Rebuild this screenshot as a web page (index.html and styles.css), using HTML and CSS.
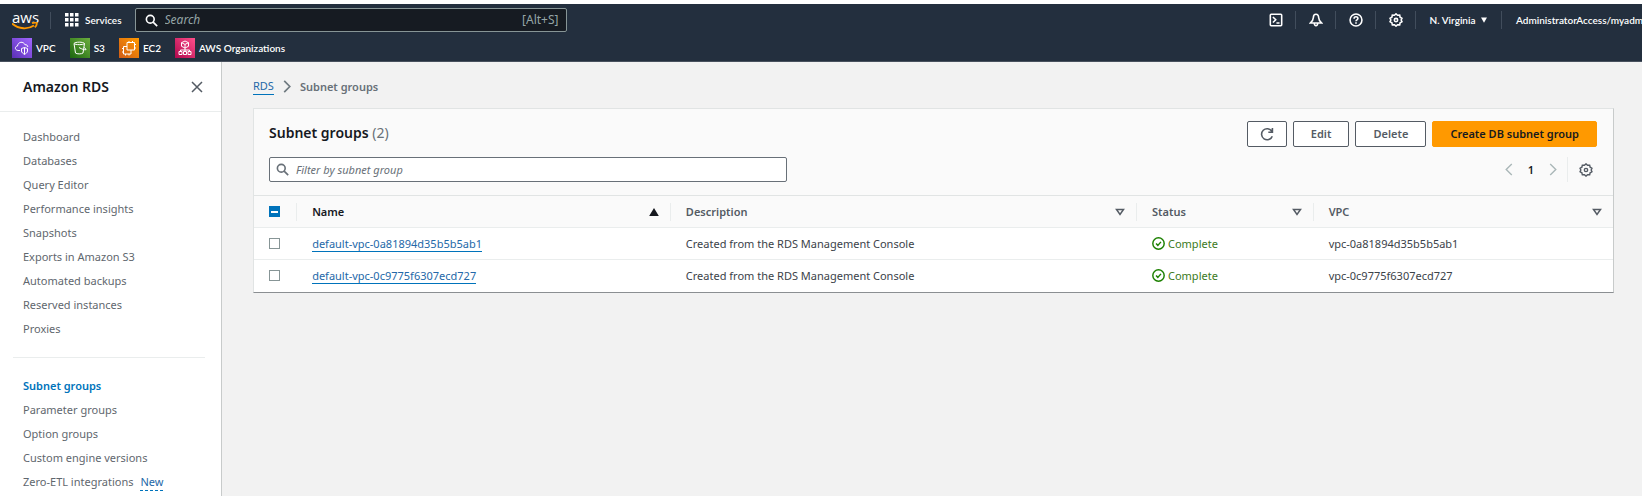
FILE: index.html
```html
<!DOCTYPE html>
<html lang="en">
<head>
<meta charset="utf-8">
<title>RDS - Subnet groups</title>
<link rel="stylesheet" href="styles.css">
</head>
<body>
<svg class="defs" aria-hidden="true">
  <symbol id="gear" viewBox="0 0 16 16"><path d="M6.200 2.600 8 1l1.800 1.600 2.400-.1.500 2.300L14.800 6l-.9 2 .9 2-2.100 1.200-.5 2.300-2.400-.1L8 15l-1.800-1.600-2.400.1-.5-2.300L1.200 10l.9-2-.9-2 2.100-1.200.5-2.300z"/><circle cx="8" cy="8" r="1.900"/></symbol>
  <symbol id="lens" viewBox="0 0 16 16"><circle cx="6.500" cy="6.500" r="4.800"/><path d="m10 10 5 5"/></symbol>
  <symbol id="sort" viewBox="0 0 10 8"><path d="M1.500 1.500h7L5 6.500z"/></symbol>
  <symbol id="ok" viewBox="0 0 16 16"><circle cx="8" cy="8" r="7"/><path d="m5 8 2.200 2.300L11 6"/></symbol>
  <linearGradient id="purple" x1="0" y1="1" x2="1" y2="0"><stop stop-color="#5a30b5"/><stop offset="1" stop-color="#a166ff"/></linearGradient>
  <linearGradient id="green" x1="0" y1="1" x2="1" y2="0"><stop stop-color="#1b660f"/><stop offset="1" stop-color="#6cae3e"/></linearGradient>
  <linearGradient id="orange" x1="0" y1="1" x2="1" y2="0"><stop stop-color="#d05c17"/><stop offset="1" stop-color="#f90"/></linearGradient>
  <linearGradient id="pink" x1="0" y1="1" x2="1" y2="0"><stop stop-color="#b0084d"/><stop offset="1" stop-color="#ff4f8b"/></linearGradient>
</svg>
<header class="top">
  <div class="top-row">
    <a class="logo" href="#" aria-label="aws"><span class="logo-word">aws</span>
      <svg class="smile" viewBox="0 0 26 8"><path d="M0 1.500c7 6 16 6 22 2" /><path d="M20 1.200c2-.9 4.500-.9 4.700-.2.300 1-.7 3.200-1.900 4.400"/></svg></a>
    <button class="services"><svg class="grid-icon" viewBox="0 0 14 14"><path d="M0 0h3.500v3.500H0zM5 0h3.500v3.500H5zM10 0h3.500v3.500H10zM0 5h3.500v3.500H0zM5 5h3.500v3.500H5zM10 5h3.500v3.500H10zM0 10h3.500v3.500H0zM5 10h3.500v3.500H5zM10 10h3.500v3.500H10z"/></svg>Services</button>
    <label class="search"><svg class="lens"><use href="#lens"/></svg><input type="search" placeholder="Search" aria-label="Search"><span class="key">[Alt+S]</span></label>
    <nav class="tools" aria-label="Account tools">
      <button class="tool" aria-label="CloudShell"><svg class="tool-icon" viewBox="0 0 16 16"><rect x="1.500" y="1.500" width="13" height="13" rx="1"/><path d="m4.500 4.500 3.200 3.200-3.200 3.200M8.500 11.500H12"/></svg></button>
      <button class="tool" aria-label="Notifications"><svg class="tool-icon" viewBox="0 0 16 16"><path d="M8 1.500c-2 0-3 1.500-3 3.500 0 2.500-1 4-3.500 6.500h13C12 9 11 7.500 11 5c0-2-1-3.500-3-3.500zM6 11.500c.2 4 3.800 4 4 0"/></svg></button>
      <button class="tool" aria-label="Help"><svg class="tool-icon" viewBox="0 0 16 16"><circle cx="8" cy="8" r="6.800"/><path d="M5.800 6.500c0-3 4.400-2.800 4.400-.2C10.200 8 8 7.800 8 9.500M8 10.700v1.600"/></svg></button>
      <button class="tool" aria-label="Settings"><svg class="tool-icon"><use href="#gear"/></svg></button>
      <button class="region">N. Virginia <svg class="caret" viewBox="0 0 8 7"><path d="M0 0h8L4 7z"/></svg></button>
      <button class="account">AdministratorAccess/myadm</button>
    </nav>
  </div>
  <nav class="favorites" aria-label="Favorites">
    <a href="#"><svg class="fav" viewBox="0 0 20 20"><path fill="url(#purple)" d="M0 0h20v20H0z"/><path class="ln" d="M8 12.500H6c-3.500-.5-3.300-4.200-.5-4.500.5-4.500 6-5 7.500-1.200 1.500-.4 2.800.5 2.800 2.200M12.500 9.500l3 1v2.500c0 1.500-1.500 2.600-3 3.300-1.500-.7-3-1.800-3-3.300v-2.500zM12.500 9.500v7"/></svg>VPC</a>
    <a href="#"><svg class="fav" viewBox="0 0 20 20"><path fill="url(#green)" d="M0 0h20v20H0z"/><path class="ln" d="m4 5.500 1.500 9.500c1.500 1.200 6 1.200 7.500 0l1.500-9.500M4 5.500c1-1.800 9.500-1.800 10.500 0-1 1.500-9.500 1.500-10.500 0M9 9.500c3 1.800 5.500 2.500 7 2.200.3-.7-1-1.700-2-2.200"/></svg>S3</a>
    <a href="#"><svg class="fav" viewBox="0 0 20 20"><path fill="url(#orange)" d="M0 0h20v20H0z"/><path class="ln" d="M8 4.500h7.500V12H8zM8 8.500H4.500V16H12v-4M10 3v1.500M13.500 3v1.500M15.500 6.500H17M15.500 10H17M3 10.500h1.500M3 14h1.500M6.500 16v1.500M10 16v1.500"/></svg>EC2</a>
    <a href="#"><svg class="fav" viewBox="0 0 20 20"><path fill="url(#pink)" d="M0 0h20v20H0z"/><path class="ln" d="m10 3 3.500 1.700v3.600L10 10 6.500 8.300V4.700zM6.500 4.700 10 6.400l3.500-1.700M10 6.400V14M5.500 13.500V12h9v1.500M4 13.500h3v3H4zM8.500 13.500h3v3h-3zM13 13.500h3v3h-3z"/></svg>AWS Organizations</a>
  </nav>
</header>
<div class="layout">
  <aside class="sidebar">
    <div class="side-head"><h2>Amazon RDS</h2><button aria-label="Close navigation"><svg class="close" viewBox="0 0 12 12"><path d="m1 1 10 10M11 1 1 11"/></svg></button></div>
    <nav class="side-nav" aria-label="Amazon RDS">
      <ul><li><a href="#">Dashboard</a></li><li><a href="#">Databases</a></li><li><a href="#">Query Editor</a></li><li><a href="#">Performance insights</a></li><li><a href="#">Snapshots</a></li><li><a href="#">Exports in Amazon S3</a></li><li><a href="#">Automated backups</a></li><li><a href="#">Reserved instances</a></li><li><a href="#">Proxies</a></li></ul>
      <hr>
      <ul><li><a class="current" href="#" aria-current="page">Subnet groups</a></li><li><a href="#">Parameter groups</a></li><li><a href="#">Option groups</a></li><li><a href="#">Custom engine versions</a></li><li><a href="#">Zero-ETL integrations</a><button class="new">New</button></li></ul>
    </nav>
  </aside>
  <main class="main">
    <nav class="crumbs" aria-label="Breadcrumb"><a href="#">RDS</a><svg class="crumb-arrow" viewBox="0 0 8 14"><path d="m1 1 6 6-6 6"/></svg><span>Subnet groups</span></nav>
    <section class="card">
      <div class="card-head">
        <h1>Subnet groups <span>(2)</span></h1>
        <div class="actions">
          <button class="btn refresh" aria-label="Refresh"><svg class="refresh-icon" viewBox="0 0 16 16"><path d="M14 10.500A6.300 6.300 0 1 1 13.500 5M14.200 1v5H9.500"/></svg></button>
          <button class="btn">Edit</button><button class="btn">Delete</button><button class="btn primary">Create DB subnet group</button>
        </div>
      </div>
      <div class="filter-row">
        <label class="filter"><svg class="lens"><use href="#lens"/></svg><input type="search" placeholder="Filter by subnet group" aria-label="Filter by subnet group"></label>
        <div class="pager">
          <button aria-label="Previous page"><svg class="page-arrow" viewBox="0 0 8 14"><path d="M7 1 1 7l6 6"/></svg></button>
          <button class="page">1</button>
          <button aria-label="Next page"><svg class="page-arrow" viewBox="0 0 8 14"><path d="m1 1 6 6-6 6"/></svg></button>
          <button class="prefs" aria-label="Preferences"><svg class="prefs-icon"><use href="#gear"/></svg></button>
        </div>
      </div>
      <table>
        <colgroup><col class="c-check"><col class="c-name"><col class="c-desc"><col class="c-status"><col class="c-vpc"></colgroup>
        <thead><tr>
          <th><input type="checkbox" class="some" aria-label="Select all"></th>
          <th class="sorted"><div>Name<svg class="sort" viewBox="0 0 10 8"><path d="M1.500 7.200h7L5 1.500z"/></svg></div></th>
          <th><div>Description<svg class="sort"><use href="#sort"/></svg></div></th>
          <th><div>Status<svg class="sort"><use href="#sort"/></svg></div></th>
          <th><div>VPC<svg class="sort"><use href="#sort"/></svg></div></th>
        </tr></thead>
        <tbody>
          <tr><td><input type="checkbox" aria-label="Select default-vpc-0a81894d35b5b5ab1"></td><td><a href="#">default-vpc-0a81894d35b5b5ab1</a></td><td>Created from the RDS Management Console</td><td><span class="status"><svg class="ok"><use href="#ok"/></svg>Complete</span></td><td>vpc-0a81894d35b5b5ab1</td></tr>
          <tr><td><input type="checkbox" aria-label="Select default-vpc-0c9775f6307ecd727"></td><td><a href="#">default-vpc-0c9775f6307ecd727</a></td><td>Created from the RDS Management Console</td><td><span class="status"><svg class="ok"><use href="#ok"/></svg>Complete</span></td><td>vpc-0c9775f6307ecd727</td></tr>
        </tbody>
      </table>
    </section>
  </main>
</div>
</body>
</html>
```
FILE: styles.css
```css
* { box-sizing: border-box; }
html, body { height: 100%; }
body { margin: 0; padding-top: 4px; display: flex; flex-direction: column; overflow: hidden; background: #fff; color: #3b4249; font: 11px/16px "Noto Sans", sans-serif; }
button, input { font: inherit; color: inherit; }
button { padding: 0; border: 0; background: none; cursor: pointer; }
a { color: inherit; text-decoration: none; }
svg { display: block; flex: none; fill: none; stroke: currentColor; }
.defs { position: absolute; width: 0; height: 0; }
h1, h2, ul { margin: 0; padding: 0; }
li { list-style: none; }

.top { flex: none; background: #232f3e; color: #fff; border-bottom: 1px solid #48515e; font: 600 10px/16px Lato, sans-serif; }
.top-row { display: flex; align-items: center; height: 32px; padding-left: 12px; }
.logo { flex: none; width: 39px; height: 17px; border-right: 1px solid #414d5c; display: flex; flex-direction: column; }
.logo-word { font: 500 15px/10px "Open Sans", sans-serif; }
.smile { width: 26px; height: 8px; stroke: #f90; stroke-width: 1.8; }
.services { display: flex; align-items: center; gap: 6px; margin-left: 14px; }
.grid-icon { width: 14px; height: 14px; fill: #fff; stroke: none; }
.search { display: flex; align-items: center; flex: 0 1 432px; height: 24px; margin-left: 13px; padding: 0 7px 0 9px; background: #161b22; border: 1px solid #879596; border-radius: 2px; font: 12px/16px "Noto Sans", sans-serif; }
.lens { width: 13px; height: 13px; stroke-width: 2; }
.search input, .filter input { flex: 1; min-width: 0; padding: 0; border: 0; outline: 0; background: none; }
.search input { margin-left: 7px; }
.search input::placeholder, .filter input::placeholder { font-style: italic; opacity: 1; color: #95a5a6; }
.key { color: #95a5a6; }
.tools { display: flex; align-items: center; flex: none; width: 386px; margin-left: auto; overflow: hidden; }
.tool, .region { display: flex; flex: none; align-items: center; justify-content: center; height: 18px; border-right: 1px solid #414d5c; }
.tool { width: 40px; }
.tool-icon { width: 14px; height: 14px; stroke-width: 1.8; }
.region { width: 86px; gap: 6px; }
.caret { width: 6px; height: 6px; fill: #fff; stroke: none; }
.account { flex: none; margin-left: 14px; white-space: nowrap; }
.favorites { display: flex; gap: 14px; height: 25px; padding: 2px 0 0 12px; }
.favorites a { display: flex; align-items: center; gap: 4px; height: 20px; }
.fav { width: 20px; height: 20px; stroke: none; }
.ln { stroke: #fff; stroke-width: 1; }

.layout { display: flex; flex: 1; min-height: 0; }
.sidebar { flex: none; width: 222px; border-right: 1px solid #c8cbcb; overflow: hidden; background: #fff; }
.side-head { display: flex; align-items: center; justify-content: space-between; height: 50px; padding: 0 18px 0 23px; border-bottom: 1px solid #eaeded; color: #16191f; }
h2 { font-size: 14px; line-height: 20px; font-weight: 600; }
.close { width: 12px; height: 12px; stroke: #545b64; stroke-width: 1.5; }
.side-nav { padding: 13px 16px 0 13px; color: #5f676e; }
.side-nav ul { padding-left: 10px; }
.side-nav li { display: flex; align-items: center; gap: 7px; height: 24px; white-space: nowrap; }
.side-nav hr { height: 1px; margin: 16px 0; border: 0; background: #eaeded; }
.current { color: #0073bb; font-weight: 600; }
.new { color: #2468a8; border-bottom: 1px dashed #0073bb; }

.main { flex: 1; min-width: 0; padding: 16px 28px 0 31px; background: #f2f2f2; }
.crumbs { display: flex; align-items: center; gap: 9px; height: 17px; color: #687078; font-weight: 600; }
.crumbs a { color: #2468a8; font-weight: 400; border-bottom: 1px solid #0073bb; }
.crumb-arrow { width: 8px; height: 13px; stroke: #6f7a80; stroke-width: 1.8; }
.card { margin-top: 13px; background: #fafafa; border: 1px solid #e1e4e4; border-bottom-color: #8b8f92; border-right-color: #c8cbcb; }
.card-head { display: flex; justify-content: space-between; padding: 12px 16px 0 15px; }
h1 { font-size: 14px; line-height: 24px; font-weight: 600; color: #16191f; }
h1 span { font-weight: 400; color: #687078; }
.actions { display: flex; gap: 6px; }
.btn { height: 26px; padding: 0 17px; border: 1px solid #545b64; border-radius: 2px; background: #fff; color: #545b64; font-weight: 600; }
.refresh { padding: 0 12px; }
.refresh-icon { width: 14px; height: 14px; stroke-width: 1.8; }
.primary { border-color: #f90; background: #f90; color: #16191f; }
.filter-row { display: flex; align-items: center; justify-content: space-between; padding: 10px 20px 13px 15px; }
.filter { display: flex; align-items: center; width: 518px; height: 25px; padding: 0 6px; gap: 7px; border: 1px solid #687078; border-radius: 2px; background: #fff; color: #687078; }
.filter input::placeholder { color: #687078; }
.pager { display: flex; align-items: center; height: 25px; }
.page-arrow { width: 8px; height: 13px; stroke: #aab7b8; stroke-width: 1.5; }
.page { width: 36px; font-weight: 600; color: #16191f; }
.prefs { display: flex; align-items: center; height: 25px; margin-left: 10px; padding-left: 11px; border-left: 1px solid #eaeded; color: #545b64; }
.prefs-icon { width: 14px; height: 14px; stroke-width: 1.6; }

table { width: 100%; table-layout: fixed; border-collapse: collapse; border-top: 1px solid #e1e4e4; background: #fff; }
.c-check { width: 3.1%; }
.c-name { width: 27.5%; }
.c-desc { width: 34.3%; }
.c-status { width: 13%; }
th, td { padding: 0 15px 0 16px; text-align: left; vertical-align: middle; }
th { height: 32px; padding-right: 11px; background: #fafafa; color: #545b64; font-weight: 600; }
th div { display: flex; align-items: center; justify-content: space-between; height: 18px; }
th:first-child, td:first-child { padding: 0 0 0 15px; }
th + th { background: linear-gradient(#eaeded, #eaeded) left center / 1px 18px no-repeat #fafafa; }
.sorted { color: #16191f; }
.sorted .sort { fill: #16191f; }
.sort { width: 10px; height: 8px; stroke-width: 1.5; }
td { height: 32px; border-top: 1px solid #eaeded; white-space: nowrap; }
td a { color: #2468a8; border-bottom: 1px solid #0073bb; }
.status { display: flex; align-items: center; gap: 3px; color: #3c7a22; }
.ok { width: 13px; height: 13px; stroke: #1d8102; stroke-width: 1.8; }
input[type="checkbox"] { appearance: none; display: block; width: 11px; height: 11px; margin: 0; border: 1px solid #879596; background: #fff; }
input.some { border-color: #0073bb; background: linear-gradient(#fff, #fff) center / 7px 2px no-repeat #0073bb; }
```
